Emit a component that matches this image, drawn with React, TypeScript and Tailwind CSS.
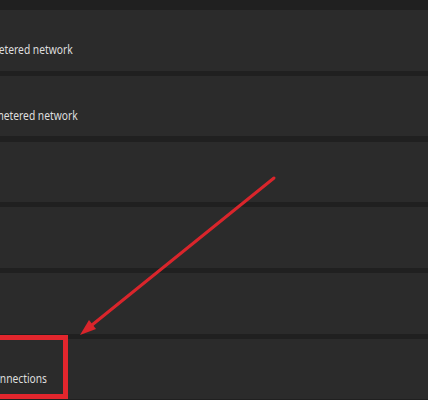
import React from "react";

function Row({ text, end }: { text?: string; end?: number }) {
  return (
    <div className="relative h-[60.5px] shrink-0 overflow-hidden bg-[#2b2b2b]">
      {text ? (
        <div
          className="flex justify-end whitespace-nowrap pt-[32px]"
          style={{ width: `${end}px` }}
        >
          <span className="inline-block shrink-0 origin-right scale-x-[0.82] text-[12.5px] leading-[16px] text-[#dedede] [font-family:'Noto_Sans',sans-serif]">
            {text}
          </span>
        </div>
      ) : null}
    </div>
  );
}

export default function App() {
  return (
    <div className="relative h-[400px] w-[428px] overflow-hidden bg-[#202020]">
      <div className="flex flex-col gap-[5.25px] pt-[10px]">
        <Row text="Set as metered network" end={73} />
        <Row text="Set as metered network" end={78} />
        <Row />
        <Row />
        <Row />
        <Row text="Connections" end={47} />
      </div>

      {/* red highlight box */}
      <div className="absolute left-[-6px] top-[335px] h-[64px] w-[74px] border-[5px] border-[#e2262d]" />

      {/* red arrow */}
      <svg
        className="pointer-events-none absolute left-0 top-0"
        width="428"
        height="400"
        viewBox="0 0 428 400"
      >
        <line
          x1="274"
          y1="178"
          x2="92"
          y2="325"
          stroke="#d9252b"
          strokeWidth="3"
          strokeLinecap="round"
        />
        <polygon points="80,335 96,329 89,320" fill="#d9252b" />
      </svg>
    </div>
  );
}
